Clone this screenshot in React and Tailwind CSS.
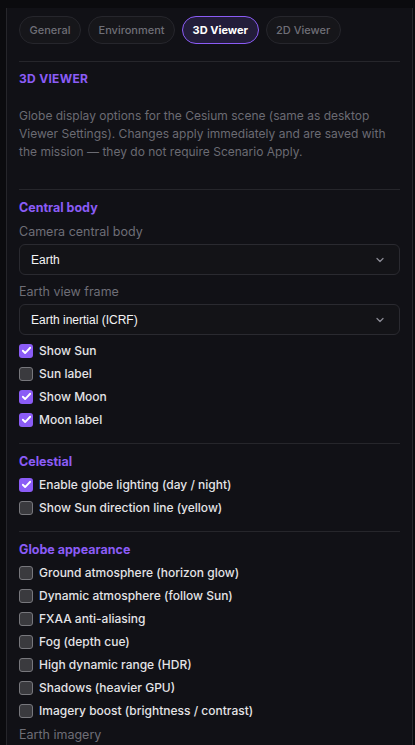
import React from "react";

function Chevron() {
  return (
    <svg width="12" height="12" viewBox="0 0 24 24" fill="none" stroke="#8a8a94" strokeWidth="2.5" strokeLinecap="round" strokeLinejoin="round">
      <path d="M6 9l6 6 6-6" />
    </svg>
  );
}

function Check({ checked, label }) {
  return (
    <div className="flex items-center gap-[6px] h-[23px]">
      {checked ? (
        <div className="w-[14px] h-[14px] rounded-[3px] bg-[#8b5cf6] flex items-center justify-center">
          <svg width="11" height="11" viewBox="0 0 24 24" fill="none" stroke="white" strokeWidth="4" strokeLinecap="round" strokeLinejoin="round">
            <path d="M4 12.5l5 5L20 6" />
          </svg>
        </div>
      ) : (
        <div className="w-[14px] h-[14px] rounded-[3px] bg-[#3a3a3e] border border-[#77777c]" />
      )}
      <span className="text-[12px] font-medium text-[#e4e4e7]">{label}</span>
    </div>
  );
}

function Select({ value }) {
  return (
    <div className="h-[31px] rounded-[6px] border border-[#2a2a30] bg-[#131317] flex items-center justify-between pl-[11px] pr-[13px]">
      <span className="text-[12px] font-medium text-[#f4f4f5]" style={{ fontFamily: "'Liberation Sans', Arial, sans-serif" }}>{value}</span>
      <Chevron />
    </div>
  );
}

function Heading({ children }) {
  return <div className="text-[12.5px] font-bold text-[#8b5cf6] leading-[18px]">{children}</div>;
}

function Label({ children }) {
  return <div className="text-[12.5px] text-[#6e6e76] leading-[18px]">{children}</div>;
}

export default function App() {
  const tabs = ["General", "Environment", "3D Viewer", "2D Viewer"];
  return (
    <div className="w-[415px] h-[745px] overflow-hidden bg-[#0b0b0e] pt-[8px] pl-[6px] pr-[2px]" style={{ fontFamily: "Inter, 'Noto Sans', sans-serif" }}>
      <div className="h-full bg-[#111116] border-l border-r border-[#26262b] px-[12px]">
        <div className="flex gap-[7px] pt-[8px]">
          {tabs.map((t) => (
            <div
              key={t}
              className={
                t === "3D Viewer"
                  ? "h-[28px] px-[9.5px] rounded-full border border-[#8b5cf6] bg-[#231d3a] text-white font-bold text-[11px] flex items-center"
                  : "h-[28px] px-[9.5px] rounded-full border border-[#26262c] bg-[#16161a] text-[#6f6f77] font-medium text-[11px] flex items-center"
              }
            >
              {t}
            </div>
          ))}
        </div>
        <div className="mt-[17px] border-t border-[#26262b]" />
        <div className="pt-[8px] text-[12px] font-bold text-[#8b5cf6] tracking-[0.3px] leading-[18px]">3D VIEWER</div>
        <div className="mt-[19px] text-[12px] text-[#6b6b73] leading-[18px]">
          Globe display options for the Cesium scene (same as desktop Viewer Settings). Changes apply immediately and are saved with the mission — they do not require Scenario Apply.
        </div>
        <div className="mt-[28px] border-t border-[#26262b]" />
        <div className="pt-[9px]">
          <Heading>Central body</Heading>
          <div className="mt-[6px]"><Label>Camera central body</Label></div>
          <div className="mt-[3px]"><Select value="Earth" /></div>
          <div className="mt-[8px]"><Label>Earth view frame</Label></div>
          <div className="mt-[3px]"><Select value="Earth inertial (ICRF)" /></div>
          <div className="mt-[4px]">
            <Check checked label="Show Sun" />
            <Check label="Sun label" />
            <Check checked label="Show Moon" />
            <Check checked label="Moon label" />
          </div>
        </div>
        <div className="mt-[12px] border-t border-[#26262b]" />
        <div className="pt-[9px]">
          <Heading>Celestial</Heading>
          <div className="mt-[2px]">
            <Check checked label="Enable globe lighting (day / night)" />
            <Check label="Show Sun direction line (yellow)" />
          </div>
        </div>
        <div className="mt-[12px] border-t border-[#26262b]" />
        <div className="pt-[9px]">
          <Heading>Globe appearance</Heading>
          <div className="mt-[2px]">
            <Check label="Ground atmosphere (horizon glow)" />
            <Check label="Dynamic atmosphere (follow Sun)" />
            <Check label="FXAA anti-aliasing" />
            <Check label="Fog (depth cue)" />
            <Check label="High dynamic range (HDR)" />
            <Check label="Shadows (heavier GPU)" />
            <Check label="Imagery boost (brightness / contrast)" />
          </div>
          <div className="mt-[4px]"><Label>Earth imagery</Label></div>
        </div>
      </div>
    </div>
  );
}
